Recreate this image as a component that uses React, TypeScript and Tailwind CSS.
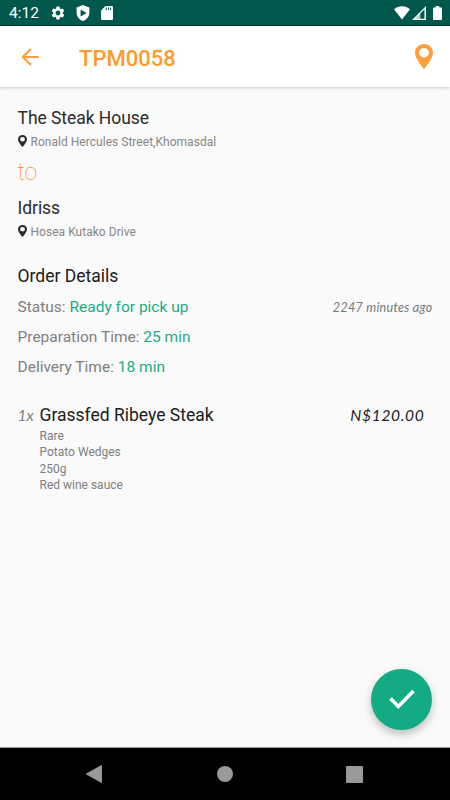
import { MdArrowBack, MdSettings } from 'react-icons/md';

interface OrderItem {
  quantity: number;
  name: string;
  price: string;
  extras: string[];
}

const items: OrderItem[] = [
  {
    quantity: 1,
    name: 'Grassfed Ribeye Steak',
    price: 'N$120.00',
    extras: ['Rare', 'Potato Wedges', '250g', 'Red wine sauce'],
  },
];

const Pin = ({ className }: { className: string }) => (
  <svg viewBox="0 0 14 20" className={className} fill="currentColor" preserveAspectRatio="none">
    <path
      fillRule="evenodd"
      d="M7 0C3.13 0 0 3.13 0 7c0 5.25 7 13 7 13s7-7.75 7-13c0-3.87-3.13-7-7-7zm0 10.8a3.8 3.8 0 1 1 0-7.6 3.8 3.8 0 0 1 0 7.6z"
    />
  </svg>
);

const StatusBar = () => (
  <div className="flex h-[26px] items-center border-b border-[#003d2e] bg-[#00574b] pr-[8px] pl-[9px] text-white">
    <span className="w-[41px] pt-[3px] text-[15.5px] leading-none">4:12</span>
    <MdSettings className="h-[16px] w-[16px]" />
    <svg viewBox="0 0 14 16" className="mt-px ml-[10px] h-[16px] w-[14px]" fill="currentColor">
      <path
        fillRule="evenodd"
        d="M7 0L.6 2.6V7.5C.6 11.5 3.3 14.8 7 16c3.7-1.2 6.4-4.5 6.4-8.5V2.6zM4.6 4.5L10.6 8l-6 3.5z"
      />
    </svg>
    <svg viewBox="0 0 12 14" className="mt-px ml-[11px] h-[14px] w-[12px]" fill="currentColor">
      <path d="M4.5 0h6.2A1.3 1.3 0 0 1 12 1.3v11.4a1.3 1.3 0 0 1-1.3 1.3H1.3A1.3 1.3 0 0 1 0 12.7V4.5z" />
      <path d="M5.2 1.5v2.6M7.4 1.5v2.6M9.6 1.5v2.6" stroke="#00574b" strokeWidth="1" />
    </svg>
    <svg viewBox="0 0 16 14" className="ml-auto h-[14px] w-[16px]" fill="currentColor">
      <path d="M0 3.2C4.5-.9 11.5-.9 16 3.2L8 13.5z" />
    </svg>
    <svg viewBox="0 0 14 14" className="ml-[2px] h-[14px] w-[14px]" fill="none">
      <path d="M0 14L14 0V14zM8.3 7.5v5.2h4.2V3.2z" fill="white" fillRule="evenodd" />
      <path d="M3 12.7l5.3-5.3v5.3z" fill="#00574b" fillOpacity=".3" />
    </svg>
    <svg viewBox="0 0 9 14" className="ml-[7px] h-[14px] w-[9px]" fill="currentColor">
      <path d="M2.7 0h3.6v1.4h1.9a.8.8 0 0 1 .8.8v11a.8.8 0 0 1-.8.8H.8a.8.8 0 0 1-.8-.8v-11a.8.8 0 0 1 .8-.8h1.9z" />
    </svg>
  </div>
);

const Toolbar = () => (
  <div className="z-10 flex h-[61px] items-center bg-white pr-[17px] pl-[17px] text-[#ff9f3f] shadow-[0_1px_3px_rgba(0,0,0,0.2)]">
    <MdArrowBack className="h-[26px] w-[26px]" />
    <h1 className="ml-[36px] pt-[4px] text-[22px] leading-none font-medium text-[#ff9a2b]">TPM0058</h1>
    <Pin className="ml-auto h-[25px] w-[18px]" />
  </div>
);

const Stop = ({ name, address }: { name: string; address: string }) => (
  <div>
    <h2 className="text-[17.5px] leading-6 tracking-[-0.05px] text-[#2b2b2b]">{name}</h2>
    <div className="flex h-6 items-center">
      <Pin className="-mt-[3px] h-[12px] w-[9px] text-[#2b2b2b]" />
      <span className="ml-1 text-[12px] tracking-[0.03px] text-[#868686]">{address}</span>
    </div>
  </div>
);

const Detail = ({ label, value }: { label: string; value: string }) => (
  <p className="text-[15.5px] leading-[30px] text-[#808080]">
    {label}: <span className="text-[#1cad82]">{value}</span>
  </p>
);

const App = () => {
  return (
    <div className="flex h-[800px] w-[450px] flex-col overflow-hidden bg-[#fafafa] font-['Roboto',sans-serif]">
      <StatusBar />
      <Toolbar />
      <main className="relative flex-1 px-[17.5px] pt-[19px]">
        <Stop name="The Steak House" address="Ronald Hercules Street,Khomasdal" />
        <p className="h-[42px] pt-[5px] text-[23px] leading-7 font-thin text-[#ff8410]">to</p>
        <Stop name="Idriss" address="Hosea Kutako Drive" />
        <h2 className="mt-5 text-[17.5px] leading-6 text-[#1c1c1c]">Order Details</h2>
        <div className="mt-1">
          <div className="flex items-center justify-between">
            <Detail label="Status" value="Ready for pick up" />
            <span className="pt-[2px] font-['Lato',sans-serif] text-[12.5px] tracking-[0.3px] text-[#777] italic">
              2247 minutes ago
            </span>
          </div>
          <Detail label="Preparation Time" value="25 min" />
          <Detail label="Delivery Time" value="18 min" />
        </div>
        {items.map(item => (
          <div key={item.name} className="mt-[21px] flex items-start">
            <span className="w-[22px] font-['Lato',sans-serif] text-[15.5px] leading-6 text-[#808080] italic">
              {item.quantity}x
            </span>
            <div>
              <h3 className="text-[17.5px] leading-6 text-[#1c1c1c]">{item.name}</h3>
              <ul className="mt-px text-[12px] leading-[16.3px] text-[#808080]">
                {item.extras.map(extra => (
                  <li key={extra}>{extra}</li>
                ))}
              </ul>
            </div>
            <span className="mr-[8px] ml-auto font-['Lato',sans-serif] text-[15.5px] leading-6 tracking-[0.7px] text-[#1c1c1c] italic">
              {item.price}
            </span>
          </div>
        ))}
        <button className="absolute right-[18px] bottom-[17px] flex h-[61px] w-[61px] items-center justify-center rounded-full bg-[#12ab83] shadow-[0_4px_8px_rgba(0,0,0,0.25)]">
          <svg viewBox="0 0 26 21" className="h-[21px] w-[26px]" fill="none">
            <path d="M1.5 9.5l7.8 8L24.5 2" stroke="white" strokeWidth="3.6" />
          </svg>
        </button>
      </main>
      <nav className="flex h-[53px] items-center justify-between border-t border-[#999] bg-black pr-[87px] pl-[86px] text-[#999]">
        <svg viewBox="0 0 16 18" className="h-[18px] w-[16px]" fill="currentColor">
          <path d="M15 .3q1-.5 1 .6v16.2q0 1.1-1 .6L.4 9.5q-.6-.5 0-1z" />
        </svg>
        <div className="ml-px h-4 w-4 rounded-full bg-[#999]" />
        <div className="h-[17px] w-[17px] rounded-[1px] bg-[#999]" />
      </nav>
    </div>
  );
};

export default App;
